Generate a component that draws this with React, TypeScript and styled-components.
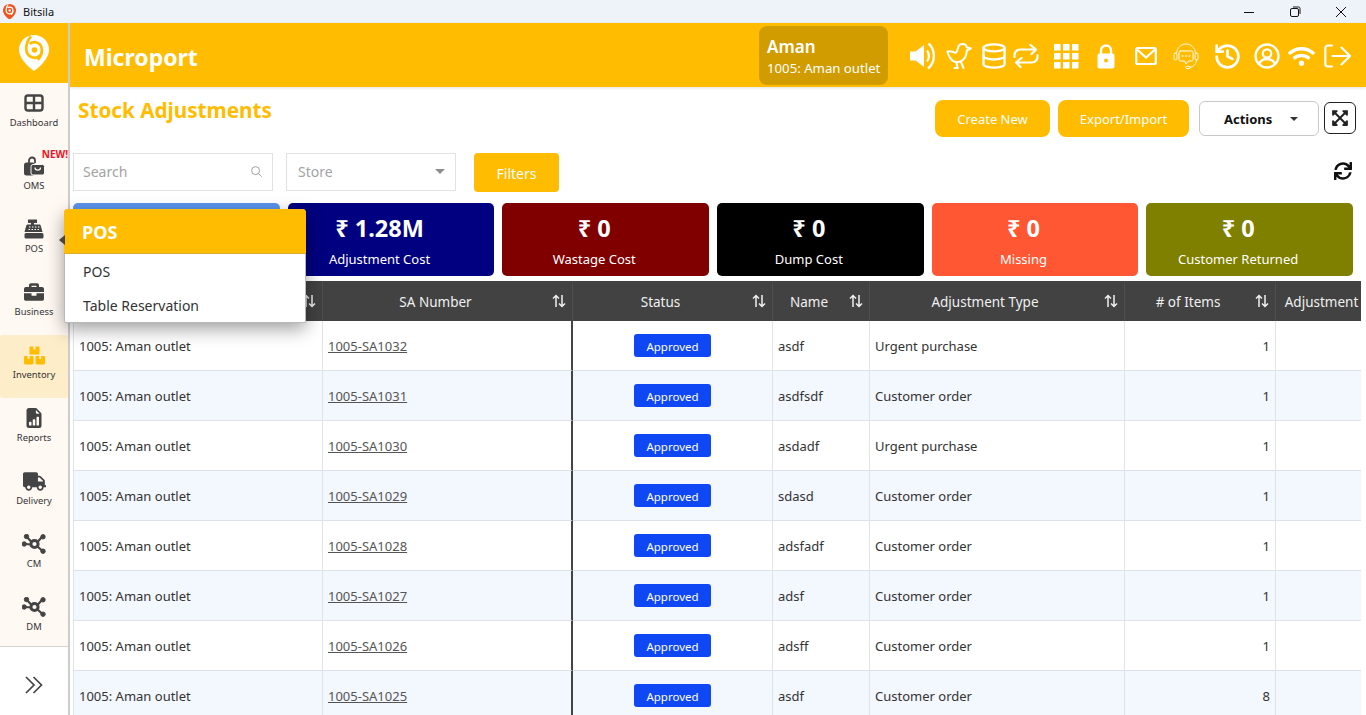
import * as React from 'react'
import styled, { createGlobalStyle } from 'styled-components'
import { FaBriefcase, FaExpandArrowsAlt, FaSync, FaTruck, FaWifi } from 'react-icons/fa'
import { BsFileEarmarkBarGraphFill } from 'react-icons/bs'
import { LuDatabase, LuHistory } from 'react-icons/lu'
import { IoSearchOutline } from 'react-icons/io5'

const AMBER = '#ffbc00'
const FONT = "'Noto Sans', 'Open Sans', sans-serif"

const GlobalStyle = createGlobalStyle`
  html, body {
    margin: 0;
    padding: 0;
    height: 100%;
    overflow: hidden;
    background: #fff;
    font-family: ${FONT};
  }
  * { box-sizing: border-box; }
`

const Page = styled.div`
  width: 1366px;
  height: 715px;
  display: flex;
  flex-direction: column;
  overflow: hidden;
`
const TitleBar = styled.div`
  height: 23px;
  flex: none;
  background: #eef3fa;
  display: flex;
  align-items: center;
  padding-left: 3px;
  font-size: 11px;
  color: #111;
`
const AppName = styled.span`
  margin-left: 7px;
`
const WindowButtons = styled.div`
  margin-left: auto;
  display: grid;
  grid-template-columns: repeat(3, 46px);
  justify-items: center;
  align-items: center;
  margin-right: 2px;
`
const Body = styled.div`
  flex: 1;
  display: flex;
  min-height: 0;
`
const Sidebar = styled.aside`
  position: relative;
  z-index: 5;
  width: 70px;
  flex: none;
  display: flex;
  flex-direction: column;
  border-right: 2px solid #ccc;
  background: #fff;
`
const LogoBox = styled.div`
  height: 60px;
  flex: none;
  background: ${AMBER};
  display: flex;
  align-items: center;
  justify-content: center;
`
const NavList = styled.nav`
  height: 564px;
  flex: none;
  overflow: hidden;
  background: #fff8f3;
  border-bottom: 1px solid #d5d2d0;
`
const NavItem = styled.div<{ $active?: boolean }>`
  position: relative;
  height: 63px;
  display: flex;
  flex-direction: column;
  align-items: center;
  padding-top: 9px;
  background: ${props => (props.$active ? '#fdedc9' : 'transparent')};
  border-radius: ${props => (props.$active ? '3px' : '0')};
  color: #444;
`
const NavIcon = styled.div`
  height: 22px;
  display: flex;
  align-items: center;
  justify-content: center;
`
const NavLabel = styled.span`
  margin-top: 2px;
  font-size: 9.4px;
  line-height: 13px;
  color: #333;
`
const NewBadge = styled.span`
  position: absolute;
  top: 2px;
  right: 0;
  font-size: 10px;
  line-height: 12px;
  font-weight: 700;
  color: #f5101c;
`
const Expander = styled.div`
  flex: 1;
  display: flex;
  align-items: center;
  justify-content: center;
  padding-top: 7px;
`
const Flyout = styled.div`
  position: absolute;
  left: 64px;
  top: 186px;
  width: 242px;
  height: 114px;
  background: #fff;
  border-radius: 4px 4px 2px 2px;
  border: 1px solid #b9b9b9;
  border-top: 0;
  box-shadow: 0 6px 18px rgba(0, 0, 0, 0.38);
  &::before {
    content: '';
    position: absolute;
    left: -6px;
    top: 26px;
    border: 5px solid transparent;
    border-left: 0;
    border-right: 6px solid #444;
  }
`
const FlyoutHead = styled.div`
  height: 45px;
  margin: 0 -1px;
  padding-left: 18px;
  background: ${AMBER};
  border-radius: 4px 4px 0 0;
  border-bottom: 1px solid #dcae2a;
  color: #fff;
  font-size: 18px;
  font-weight: 700;
  line-height: 47px;
`
const FlyoutLink = styled.div`
  height: 34px;
  padding-left: 18px;
  font-size: 14px;
  line-height: 36px;
  color: #333;
`
const Main = styled.main`
  flex: 1;
  min-width: 0;
  display: flex;
  flex-direction: column;
`
const Header = styled.header`
  height: 64px;
  flex: none;
  background: ${AMBER};
  display: flex;
  align-items: center;
  padding: 0 13px 0 14px;
  box-shadow: 0 1px 3px rgba(0, 0, 0, 0.12);
`
const Brand = styled.div`
  color: #fff;
  font-size: 23px;
  font-weight: 700;
  padding-top: 3px;
  margin-right: auto;
`
const UserChip = styled.div`
  width: 129px;
  height: 59px;
  background: #d19c00;
  border-radius: 8px;
  color: #fff;
  padding: 9px 0 0 8px;
  margin-right: 17px;
  margin-top: 1px;
`
const UserName = styled.div`
  font-size: 17px;
  font-weight: 600;
  line-height: 24px;
`
const UserStore = styled.div`
  font-size: 13.2px;
  line-height: 18px;
  white-space: nowrap;
`
const HeaderIcons = styled.div`
  display: grid;
  grid-template-columns: 36px 36px 34px 30px 50px 30px 50px 30px 52px 28px 40px 32px;
  justify-items: center;
  align-items: center;
  margin-top: 2px;
  color: #fff;
`
const Content = styled.div`
  flex: 1;
  min-height: 0;
  padding: 13px 5px 0 3px;
  display: flex;
  flex-direction: column;
`
const TopRow = styled.div`
  height: 37px;
  flex: none;
  display: flex;
  align-items: flex-start;
`
const PageTitle = styled.h1`
  margin: -4px auto 0 5px;
  font-size: 20.7px;
  line-height: 28px;
  font-weight: 700;
  color: ${AMBER};
`
const AmberButton = styled.div<{ $width: number }>`
  width: ${props => props.$width}px;
  height: 37px;
  border-radius: 8px;
  background: ${AMBER};
  color: #fff;
  font-size: 13px;
  display: flex;
  align-items: center;
  justify-content: center;
  flex: none;
`
const ActionButtons = styled.div`
  display: flex;
  gap: 8px;
  margin-right: 10px;
`
const ActionsSelect = styled.div`
  width: 120px;
  height: 35px;
  margin-top: 1px;
  border: 1px solid #c8c8c8;
  border-radius: 6px;
  display: flex;
  align-items: center;
  justify-content: space-between;
  padding: 0 20px 0 24px;
  font-size: 13px;
  font-weight: 700;
  color: #111;
  flex: none;
  &::after {
    content: '';
    border: 4px solid transparent;
    border-top: 4px solid #333;
    border-bottom: 0;
  }
`
const ExpandButton = styled.div`
  width: 32px;
  height: 32px;
  margin: 2px 5px 0 5px;
  border: 1px solid #222;
  border-radius: 6px;
  display: flex;
  align-items: center;
  justify-content: center;
  color: #222;
  flex: none;
`
const FilterRow = styled.div`
  height: 39px;
  margin-top: 16px;
  flex: none;
  display: flex;
  align-items: flex-start;
`
const Field = styled.div<{ $width: number }>`
  width: ${props => props.$width}px;
  height: 38px;
  border: 1px solid #e2e2e2;
  background: #fff;
  display: flex;
  align-items: center;
  justify-content: space-between;
  font-size: 14px;
  color: #a3a3a3;
  padding-bottom: 2px;
  flex: none;
`
const SearchField = styled(Field)`
  padding-left: 9px;
  padding-right: 9px;
  margin-right: 13px;
`
const StoreField = styled(Field)`
  padding-left: 11px;
  padding-right: 10px;
  margin-right: 18px;
  &::after {
    content: '';
    border: 5px solid transparent;
    border-top: 5px solid #8e8e8e;
    border-bottom: 0;
  }
`
const FiltersButton = styled.div`
  width: 85px;
  height: 39px;
  border-radius: 4px;
  background: ${AMBER};
  color: #fff;
  font-size: 14px;
  padding-top: 2px;
  display: flex;
  align-items: center;
  justify-content: center;
  flex: none;
`
const RefreshIcon = styled.div`
  margin: 9px 9px 0 auto;
  color: #111;
  line-height: 0;
`
const Cards = styled.div`
  margin-top: 11px;
  width: 1280px;
  flex: none;
  display: grid;
  grid-template-columns: repeat(6, 1fr);
  gap: 8px;
`
const Card = styled.div<{ $color: string }>`
  height: 73px;
  border-radius: 5px;
  background: ${props => props.$color};
  color: #fff;
  text-align: center;
  padding: 10px 23px 0 0;
`
const CardValue = styled.div`
  font-size: 23.5px;
  line-height: 31px;
  font-weight: 700;
`
const CardLabel = styled.div`
  font-size: 13px;
  line-height: 18px;
  margin-top: 6px;
`
const TableWrap = styled.div`
  margin-top: 5px;
  width: 1288px;
  flex: 1;
  min-height: 0;
  overflow: hidden;
`
const Table = styled.table`
  width: 1319px;
  table-layout: fixed;
  border-collapse: separate;
  border-spacing: 0;
  font-size: 13px;
  color: #333;
`
const Th = styled.th`
  position: relative;
  height: 40px;
  padding: 2px 24px 0 0;
  background: #424242;
  color: #f0f0f0;
  font-size: 13.5px;
  font-weight: 400;
  text-align: center;
  white-space: nowrap;
  border-right: 1px solid #4e4e4e;
`
const SortMark = styled.span`
  position: absolute;
  right: 5px;
  top: 12px;
  line-height: 0;
`
const Row = styled.tr<{ $alt: boolean }>`
  background: ${props => (props.$alt ? '#f3f7fe' : '#fff')};
`
const Td = styled.td<{ $divider?: boolean; $align?: string }>`
  height: 50px;
  padding: 0 5px;
  text-align: ${props => props.$align || 'left'};
  border-bottom: 1px solid #dde1e8;
  border-right: ${props => (props.$divider ? '2px solid #444' : '1px solid #dfe3ea')};
  &:first-child {
    border-left: 1px solid #dfe3ea;
  }
`
const SaLink = styled.span`
  color: #555;
  text-decoration: underline;
`
const StatusPill = styled.span`
  display: inline-block;
  width: 77px;
  height: 23px;
  border-radius: 3px;
  background: #0f47f5;
  color: #fff;
  font-size: 11.5px;
  line-height: 25px;
  text-align: center;
`

const Sort = () => (
  <svg width="16" height="16" viewBox="0 0 16 16" fill="none" stroke="#f0f0f0" strokeWidth="1.5">
    <path d="M5 14V2.500M2 5.500l3-3 3 3M11 2v11.500M8 10.500l3 3 3-3" />
  </svg>
)

const Logo = ({ size, color, inner }: { size: number; color: string; inner: string }) => (
  <svg width={size} height={size * 1.2} viewBox="0 0 30 36">
    <path d="M15 0C6.700 0 0 6.600 0 14.800c0 8 8 16.200 15 21.200 7-5 15-13.200 15-21.200C30 6.600 23.300 0 15 0z" fill={color} />
    <path
      d="M12 1.500C9 4.500 7.200 9 7.200 14c0 5 3.700 8.800 8.300 8.800 4.500 0 7.500-3.500 7.500-7.800 0-4.500-3.300-7.800-7.500-7.800-2 0-3.500.6-4.800 1.800"
      fill="none"
      stroke={inner}
      strokeWidth="2.700"
    />
    <path d="M23 15c0 4-1.500 7-4 10" fill="none" stroke={inner} strokeWidth="2.400" />
    <circle cx="15.500" cy="15" r="2.800" fill={inner} />
  </svg>
)

const DashboardIcon = () => (
  <svg width="20" height="18" viewBox="0 0 20 18" fill="none" stroke="#444" strokeWidth="2.400">
    <rect x="1.500" y="1.500" width="17" height="15" rx="2.500" />
    <path d="M1.500 9h17M10 1.500v15" />
  </svg>
)
const OmsIcon = () => (
  <svg width="22" height="20" viewBox="0 0 22 20">
    <path d="M6 7V4.500a3 3 0 0 1 6 0V7" fill="none" stroke="#444" strokeWidth="1.800" />
    <rect x="1" y="6.500" width="11" height="13" rx="2.500" fill="#444" />
    <rect x="8" y="8.500" width="13.500" height="10.500" rx="2" fill="#444" stroke="#fff8f3" strokeWidth="1" />
    <path d="M12 11.500c0 3.500 5.500 3.500 5.500 0" fill="none" stroke="#fff8f3" strokeWidth="1.300" />
  </svg>
)
const PosIcon = () => (
  <svg width="20" height="20" viewBox="0 0 20 20" fill="#444">
    <path d="M4 0.500h9v3.500h-3v1.500h5c1 0 1.500.5 1.800 1.300l1.700 6.200H.5l1.700-6.200C2.500 6 3 5.500 4 5.500h3V4H4z" />
    <rect x="0.500" y="14" width="19" height="5.500" rx="1.500" />
    <g fill="#fff8f3">
      <rect x="5" y="7.500" width="1.500" height="1" />
      <rect x="8" y="7.500" width="1.500" height="1" />
      <rect x="11" y="7.500" width="1.500" height="1" />
      <rect x="14" y="7.500" width="1.500" height="1" />
      <rect x="4.500" y="10" width="1.500" height="1" />
      <rect x="7.500" y="10" width="1.500" height="1" />
      <rect x="10.500" y="10" width="1.500" height="1" />
      <rect x="13.500" y="10" width="1.500" height="1" />
    </g>
  </svg>
)
const InventoryIcon = () => (
  <svg width="21" height="19" viewBox="0 0 21 19" fill={AMBER}>
    <path d="M6.500 0.500h2.800v3h2.200v-3h2.800c.8 0 1.200.5 1.200 1.200v6.800H5.500V1.700c0-.7.300-1.200 1-1.200z" />
    <path d="M1 10h2.600v3h2v-3H8c.6 0 1.500.5 1.500 1.200v6.100c0 .7-.8 1.200-1.500 1.200H1.500C.7 18.500 0 18 0 17.300v-6.100C0 10.500.4 10 1 10z" />
    <path d="M12.500 10h2.600v3h2v-3H19.500c.6 0 1.500.5 1.500 1.200v6.100c0 .7-.8 1.200-1.500 1.200H13c-.8 0-1.500-.5-1.500-1.200v-6.100c0-.7.400-1.200 1-1.200z" />
  </svg>
)
const HubIcon = () => (
  <svg width="24" height="20" viewBox="0 0 24 20" fill="#444" stroke="#444">
    <circle cx="12.500" cy="10" r="3.600" fill="none" strokeWidth="3" />
    <path d="M9.500 8L5 3M15.500 8l4-4.500M15.500 12.500l4.500 4M9.500 10.500L3 10" fill="none" strokeWidth="2.200" />
    <circle cx="4.500" cy="2.500" r="2.200" />
    <circle cx="21" cy="2.800" r="2.200" />
    <circle cx="21" cy="17.200" r="2.200" />
    <circle cx="2.200" cy="10" r="2.200" />
  </svg>
)
const ExpandChevrons = () => (
  <svg width="18" height="18" viewBox="0 0 18 18" fill="none" stroke="#444" strokeWidth="1.700">
    <path d="M1 1l8 8-8 8M8.500 1l8 8-8 8" />
  </svg>
)

const VolumeIcon = () => (
  <svg width="26" height="28" viewBox="0 0 26 28" fill="#fff">
    <path d="M0 9.500h5.500L14 3v22l-8.500-6.500H0z" />
    <path d="M17 8.500c2.500 3 2.500 8 0 11M18.500 1.500c6.500 5.500 8 18-.5 25" fill="none" stroke="#fff" strokeWidth="2.300" />
  </svg>
)
const BirdIcon = () => (
  <svg width="26" height="28" viewBox="0 0 26 28" fill="none" stroke="#fff" strokeWidth="2" strokeLinecap="round" strokeLinejoin="round">
    <path d="M1.500 9.500c2.500-.5 5.500 0 8 1.500 1.500-1 2-2.500 2.500-5 .4-2.500 2-4 4.500-4s4 1.500 4.300 3.300l4 1.200-4 2c-.3 5-2 9.500-6.500 11-4.500 1.500-8.500-.5-10.700-4.500-1.300-2-2-3.500-2.100-5.500z" />
    <path d="M10.500 20.500l1 5.500M15 20l2.500 6M8.500 26h3.500" />
  </svg>
)
const RepeatIcon = () => (
  <svg width="26" height="24" viewBox="0 0 26 24" fill="none" stroke="#fff" strokeWidth="2.200" strokeLinecap="round" strokeLinejoin="round">
    <path d="M1.500 13c-.5-4.500 2-7.500 6-7.500h15M17.500 1l5.500 4.500-4.500 4.500" />
    <path d="M24.500 11c.5 4.500-2 7.500-6 7.500H3M8.500 14L3 18.500 7.500 23" />
  </svg>
)
const GridIcon = () => (
  <svg width="25" height="25" viewBox="0 0 25 25" fill="#fff">
    {[0, 9, 18].map(y =>
      [0, 9, 18].map(x => <rect key={`${x}-${y}`} x={x} y={y} width="6.500" height="6.500" />)
    )}
  </svg>
)
const LockIcon = () => (
  <svg width="18" height="25" viewBox="0 0 18 25">
    <path d="M4 10V6.500a5 5 0 0 1 10 0V10" fill="none" stroke="#fff" strokeWidth="2.400" />
    <rect x="0.500" y="9.500" width="17" height="15" rx="2" fill="#fff" />
    <circle cx="9" cy="16.500" r="2" fill="#ffbc00" />
  </svg>
)
const MailIcon = () => (
  <svg width="22" height="20" viewBox="0 0 22 20" fill="none" stroke="#fff" strokeWidth="2.200">
    <rect x="1.200" y="2" width="19.600" height="16" rx="1.500" />
    <path d="M2 3.500l9 8 9-8" />
  </svg>
)
const HeadsetIcon = () => (
  <svg width="26" height="28" viewBox="0 0 26 28" fill="none" stroke="#fff" strokeWidth="0.900" strokeLinecap="round">
    <path d="M3.500 11C4 5.500 8 2 13 2s9 3.500 9.500 9" />
    <rect x="1" y="11" width="3" height="7" rx="1.500" />
    <rect x="22" y="11" width="3" height="7" rx="1.500" />
    <path d="M7.500 9h11c1 0 1.500.5 1.500 1.500v7c0 1-.5 1.500-1.500 1.500h-3L13 22l-1.500-3h-4c-1 0-1.500-.5-1.500-1.500v-7C6 9.500 6.500 9 7.500 9z" strokeWidth="1" />
    <path d="M9.500 14h.3M12.900 14h.3M16.200 14h.3" strokeWidth="1.500" />
    <path d="M23.500 18c0 4-2.500 6.500-6 7" />
    <ellipse cx="15" cy="25.500" rx="2.500" ry="1.200" />
  </svg>
)
const UserCircleIcon = () => (
  <svg width="26" height="26" viewBox="0 0 26 26" fill="none" stroke="#fff" strokeWidth="2.300">
    <circle cx="13" cy="13" r="11.500" />
    <circle cx="13" cy="10.500" r="4.200" />
    <path d="M5 21c1.500-3.500 4-5 8-5s6.500 1.500 8 5" />
  </svg>
)
const LogoutIcon = () => (
  <svg width="27" height="24" viewBox="0 0 27 24" fill="none" stroke="#fff" strokeWidth="2.200" strokeLinecap="round" strokeLinejoin="round">
    <path d="M8 1.500H4C2.300 1.500 1.300 2.500 1.300 4v16c0 1.500 1 2.500 2.700 2.500h4" />
    <path d="M8.500 12h17M17.500 3.500l8.500 8.500-8.500 8.500" />
  </svg>
)

const columns = [250, 250, 200, 97, 255, 151, 116]
const headers = ['', 'SA Number', 'Status', 'Name', 'Adjustment Type', '# of Items', 'Adjustment']

const rows = [
  ['1005-SA1032', 'asdf', 'Urgent purchase', 1],
  ['1005-SA1031', 'asdfsdf', 'Customer order', 1],
  ['1005-SA1030', 'asdadf', 'Urgent purchase', 1],
  ['1005-SA1029', 'sdasd', 'Customer order', 1],
  ['1005-SA1028', 'adsfadf', 'Customer order', 1],
  ['1005-SA1027', 'adsf', 'Customer order', 1],
  ['1005-SA1026', 'adsff', 'Customer order', 1],
  ['1005-SA1025', 'asdf', 'Customer order', 8],
]

const cards = [
  { color: '#5b94ec' },
  { color: '#000080', value: '₹ 1.28M', label: 'Adjustment Cost' },
  { color: '#800000', value: '₹ 0', label: 'Wastage Cost' },
  { color: '#000000', value: '₹ 0', label: 'Dump Cost' },
  { color: '#ff5733', value: '₹ 0', label: 'Missing' },
  { color: '#808000', value: '₹ 0', label: 'Customer Returned' },
]

const navItems = [
  { label: 'Dashboard', icon: <DashboardIcon /> },
  { label: 'OMS', icon: <OmsIcon />, isNew: true },
  { label: 'POS', icon: <PosIcon /> },
  { label: 'Business', icon: <FaBriefcase size={20} /> },
  { label: 'Inventory', icon: <InventoryIcon />, active: true },
  { label: 'Reports', icon: <BsFileEarmarkBarGraphFill size={20} /> },
  { label: 'Delivery', icon: <FaTruck size={23} /> },
  { label: 'CM', icon: <HubIcon /> },
  { label: 'DM', icon: <HubIcon /> },
]

export default function App() {
  return (
    <Page>
      <GlobalStyle />
      <TitleBar>
        <Logo size={13} color="#f0541e" inner="#fff" />
        <AppName>Bitsila</AppName>
        <WindowButtons>
          <svg width="10" height="10" viewBox="0 0 10 10" stroke="#111"><path d="M0 5.500h10" /></svg>
          <svg width="11" height="11" viewBox="0 0 11 11" fill="none" stroke="#111"><rect x="0.500" y="2.500" width="8" height="8" rx="1.500" /><path d="M3 1h5.500C9.500 1 10 1.500 10 2.500V8" /></svg>
          <svg width="12" height="12" viewBox="0 0 12 12" stroke="#111"><path d="M1 1l10 10M11 1L1 11" /></svg>
        </WindowButtons>
      </TitleBar>
      <Body>
        <Sidebar>
          <LogoBox>
            <Logo size={30} color="#fff" inner={AMBER} />
          </LogoBox>
          <NavList>
            {navItems.map(item => (
              <NavItem key={item.label} $active={item.active}>
                {item.isNew && <NewBadge>NEW!</NewBadge>}
                <NavIcon>{item.icon}</NavIcon>
                <NavLabel>{item.label}</NavLabel>
              </NavItem>
            ))}
          </NavList>
          <Expander>
            <ExpandChevrons />
          </Expander>
          <Flyout>
            <FlyoutHead>POS</FlyoutHead>
            <FlyoutLink>POS</FlyoutLink>
            <FlyoutLink>Table Reservation</FlyoutLink>
          </Flyout>
        </Sidebar>
        <Main>
          <Header>
            <Brand>Microport</Brand>
            <UserChip>
              <UserName>Aman</UserName>
              <UserStore>1005: Aman outlet</UserStore>
            </UserChip>
            <HeaderIcons>
              <VolumeIcon />
              <BirdIcon />
              <LuDatabase size={28} strokeWidth={2} />
              <RepeatIcon />
              <GridIcon />
              <LockIcon />
              <MailIcon />
              <HeadsetIcon />
              <LuHistory size={29} strokeWidth={2.200} />
              <UserCircleIcon />
              <FaWifi size={27} />
              <LogoutIcon />
            </HeaderIcons>
          </Header>
          <Content>
            <TopRow>
              <PageTitle>Stock Adjustments</PageTitle>
              <ActionButtons>
                <AmberButton $width={115}>Create New</AmberButton>
                <AmberButton $width={131}>Export/Import</AmberButton>
              </ActionButtons>
              <ActionsSelect>Actions</ActionsSelect>
              <ExpandButton>
                <FaExpandArrowsAlt size={18} />
              </ExpandButton>
            </TopRow>
            <FilterRow>
              <SearchField $width={200}>
                Search
                <IoSearchOutline size={13} color="#8a8a8a" />
              </SearchField>
              <StoreField $width={170}>Store</StoreField>
              <FiltersButton>Filters</FiltersButton>
              <RefreshIcon>
                <FaSync size={18} />
              </RefreshIcon>
            </FilterRow>
            <Cards>
              {cards.map(card => (
                <Card key={card.color} $color={card.color}>
                  <CardValue>{card.value}</CardValue>
                  <CardLabel>{card.label}</CardLabel>
                </Card>
              ))}
            </Cards>
            <TableWrap>
              <Table>
                <colgroup>
                  {columns.map((width, i) => (
                    <col key={i} style={{ width }} />
                  ))}
                </colgroup>
                <thead>
                  <tr>
                    {headers.map((title, i) => (
                      <Th key={i}>
                        {title}
                        {i < 6 && (
                          <SortMark>
                            <Sort />
                          </SortMark>
                        )}
                      </Th>
                    ))}
                  </tr>
                </thead>
                <tbody>
                  {rows.map((row, i) => (
                    <Row key={row[0]} $alt={i % 2 === 1}>
                      <Td>1005: Aman outlet</Td>
                      <Td $divider>
                        <SaLink>{row[0]}</SaLink>
                      </Td>
                      <Td $align="center">
                        <StatusPill>Approved</StatusPill>
                      </Td>
                      <Td>{row[1]}</Td>
                      <Td>{row[2]}</Td>
                      <Td $align="right">{row[3]}</Td>
                      <Td />
                    </Row>
                  ))}
                </tbody>
              </Table>
            </TableWrap>
          </Content>
        </Main>
      </Body>
    </Page>
  )
}
